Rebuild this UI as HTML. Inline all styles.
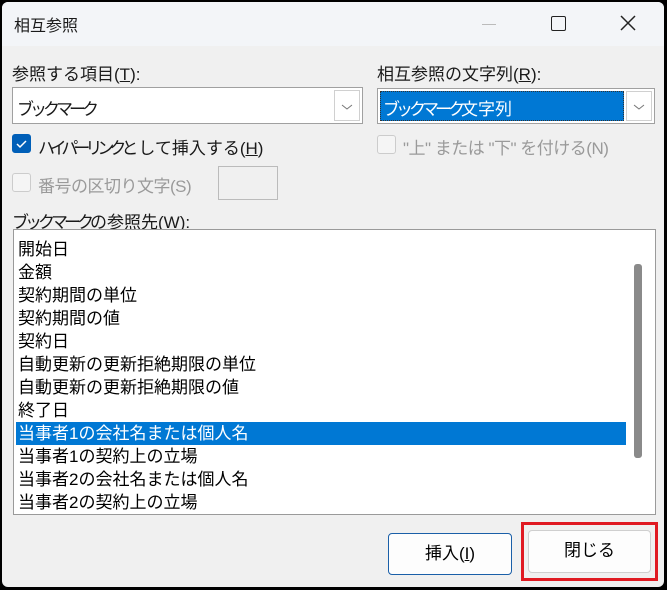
<!DOCTYPE html><html><head><meta charset="utf-8"><style>
*{box-sizing:border-box;margin:0;padding:0}
body{width:667px;height:590px;background:#000;font-family:"Liberation Sans","Noto Sans CJK JP",sans-serif;position:relative;overflow:hidden}
.win{position:absolute;left:2px;top:2px;width:662px;height:585px;background:#f0f0f0;border-radius:6px;overflow:hidden}
.title{position:absolute;left:0;top:0;width:100%;height:44px;background:#f3f5f8}
.a{position:absolute;white-space:nowrap}
.t{font-size:17px;color:#1a1a1a}
.k{letter-spacing:-4px}
.k5{letter-spacing:-5px}
.combo{position:absolute;background:#fff;border:1px solid #a0a0a0}
.arr{position:absolute;top:2px;right:2px;width:26px;bottom:2px;border:1px solid #d0d0d0;background:#fff}
.cb{position:absolute;width:19px;height:19px;border:1px solid #ccc;border-radius:3px;background:#f5f5f5}
.list{position:absolute;left:11px;top:227px;width:643px;height:286px;background:#fff;border:1px solid #9a9a9a}
.it{position:absolute;left:4px;font-size:17px;color:#000;height:23px;line-height:23px}
.btn{position:absolute;background:#fdfdfd;border:1px solid #cfcfcf;border-radius:4px;font-size:17px;text-align:center;line-height:40px}
</style></head><body><div class="win">
<div class="title"></div>
<div class="a t" style="left:12px;top:10px;font-size:16px">相互参照</div>
<div class="a" style="left:480px;top:22px;width:14px;height:1px;background:#bbb"></div>
<div class="a" style="left:549px;top:14px;width:15px;height:15px;border:1.5px solid #222;border-radius:2px"></div>
<svg class="a" style="left:618px;top:13px" width="16" height="16"><path d="M1 1L15 15M15 1L1 15" stroke="#222" stroke-width="1.5"/></svg>
<div class="a t" style="left:10px;top:58px">参照する項目(<u>T</u>):</div>
<div class="a t" style="left:375px;top:58px">相互参照の文字列(<u>R</u>):</div>
<div class="combo" style="left:10px;top:85px;width:351px;height:37px"><div class="a t" style="left:4px;top:7px"><span class="k">ブックマーク</span></div><div class="arr"><svg width="24" height="31"><path d="M7 14l5 4 5-4" stroke="#777" fill="none"/></svg></div></div>
<div class="combo" style="left:375px;top:86px;width:278px;height:36px"><div class="a" style="left:2px;top:2px;right:30px;bottom:2px;background:#0078d4;border:1px dotted #333"></div><div class="a t" style="left:5px;top:6px;color:#fff"><span class="k">ブックマーク</span>文字列</div><div class="arr"><svg width="24" height="30"><path d="M7 13l5 4 5-4" stroke="#777" fill="none"/></svg></div></div>
<div class="cb" style="left:10px;top:132px;background:#005fb8;border-color:#005fb8"><svg width="17" height="17"><path d="M4 9l3 3 6-6" stroke="#fff" stroke-width="1.5" fill="none"/></svg></div>
<div class="a t" style="left:36px;top:132px"><span class="k5">ハイパーリンク</span>として挿入する(<u>H</u>)</div>
<div class="cb" style="left:375px;top:133px"></div>
<div class="a t" style="left:401px;top:132px;color:#9a9a9a;letter-spacing:-0.5px">"上" または "下" を付ける(N)</div>
<div class="cb" style="left:10px;top:171px"></div>
<div class="a t" style="left:36px;top:170px;color:#9a9a9a;letter-spacing:-0.5px">番号の区切り文字(S)</div>
<div class="a" style="left:216px;top:164px;width:60px;height:34px;border:1px solid #bbb;background:#f0f0f0"></div>
<div class="a t" style="left:10px;top:206px"><span class="k">ブックマーク</span>の参照先(<u>W</u>):</div>
<div class="list">
<div class="it" style="top:8px">開始日</div>
<div class="it" style="top:31px">金額</div>
<div class="it" style="top:54px">契約期間の単位</div>
<div class="it" style="top:77px">契約期間の値</div>
<div class="it" style="top:100px">契約日</div>
<div class="it" style="top:123px">自動更新の更新拒絶期限の単位</div>
<div class="it" style="top:146px">自動更新の更新拒絶期限の値</div>
<div class="it" style="top:169px">終了日</div>
<div class="a" style="left:2px;top:192px;width:610px;height:23px;background:#0078d4"></div>
<div class="it" style="top:192px;color:#fff">当事者1の会社名または個人名</div>
<div class="it" style="top:215px">当事者1の契約上の立場</div>
<div class="it" style="top:238px">当事者2の会社名または個人名</div>
<div class="it" style="top:261px">当事者2の契約上の立場</div>
<div class="a" style="left:620px;top:34px;width:8px;height:194px;background:#8a8a8a;border-radius:3px"></div>
</div>
<div class="btn" style="left:386px;top:531px;width:124px;height:42px;border-color:#1a5fa8">挿入(<u>I</u>)</div>
<div class="a" style="left:519px;top:520px;width:137px;height:59px;border:3px solid #e01a22"></div>
<div class="btn" style="left:526px;top:528px;width:123px;height:43px">閉じる</div>
</div></body></html>
